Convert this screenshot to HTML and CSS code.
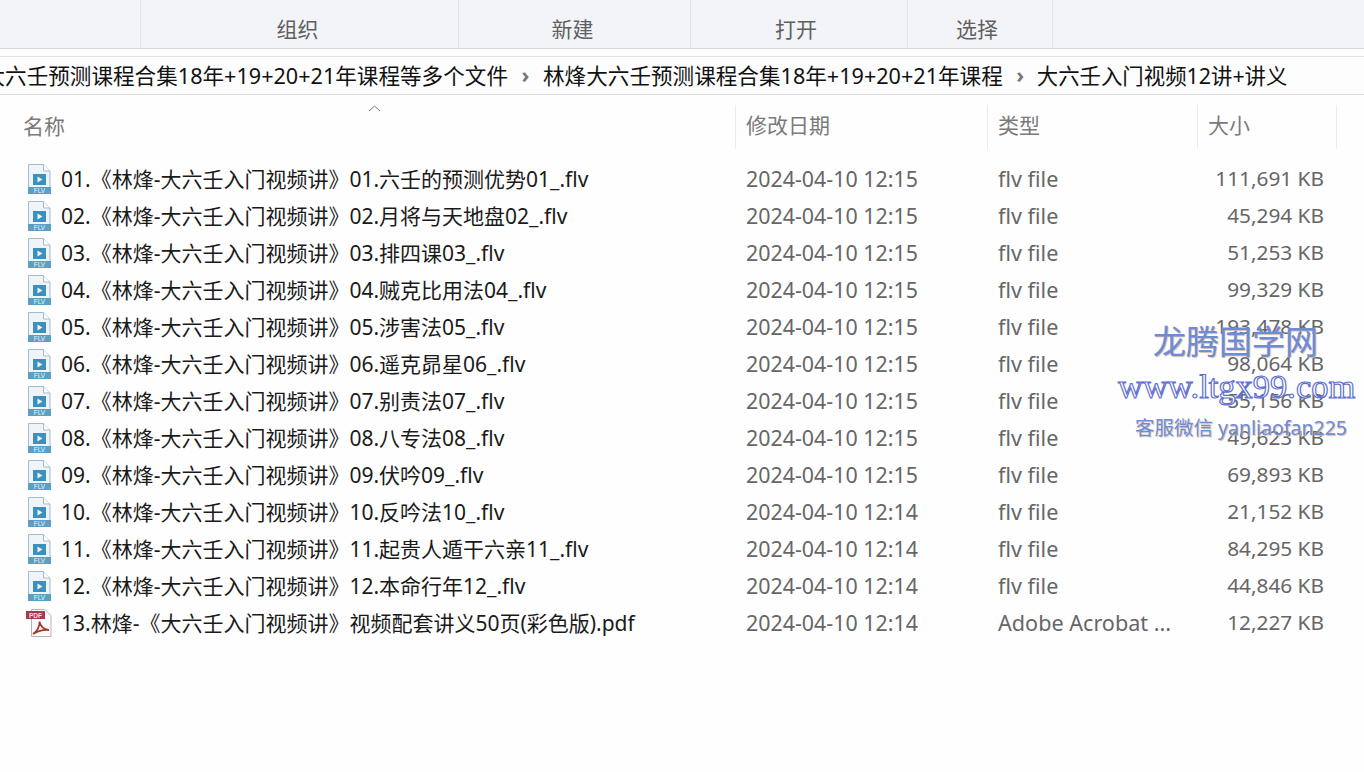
FILE: index.html
```html
<!DOCTYPE html>
<html lang="zh-CN">
<head>
    <meta charset="UTF-8">
    <title>大六壬入门视频12讲+讲义</title>
    <link rel="stylesheet" href="styles.css">
</head>
<body>
    <svg class="defs" width="0" height="0">
        <symbol id="flv" viewBox="0 0 24 30">
            <path d="M1.500 .5H16.500L23 7V29.500H1.500Z" fill="#eef4f8" stroke="#a3bccd"/>
            <path d="M16.500 .5V7H23" fill="#fff" stroke="#a3bccd"/>
            <rect x="6" y="10" width="13" height="11" fill="#3d8fbd"/>
            <path d="M10.500 12.500L15.500 15.500L10.500 18.500Z" fill="#e8f5fb"/>
            <rect x="1" y="23" width="23" height="7" fill="#5d9fc4"/>
            <text x="12.500" y="29" class="flv-label">FLV</text>
        </symbol>
        <symbol id="pdf" viewBox="0 0 26 28">
            <path d="M5.500 .5H19L25 6.500V27.500H5.500Z" fill="#fbfbfb" stroke="#b5b5b5"/>
            <rect x="0" y="2" width="19" height="8" fill="#a33a4e"/>
            <text x="9.500" y="8.500" class="pdf-label">PDF</text>
            <path d="M7 25C11 23 14 17 13.500 12.500C14 17 18 21 23 21C18 20.500 12 22 7 25Z" fill="none" stroke="#a8352e" stroke-width="1.800"/>
        </symbol>
    </svg>

    <div class="toolbar">
        <div class="tool-spacer"></div>
        <div class="tool tool-organize">组织</div>
        <div class="tool tool-new">新建</div>
        <div class="tool tool-open">打开</div>
        <div class="tool tool-select">选择</div>
    </div>

    <div class="address-bar">
        <div class="crumb-first"><span>大六壬预测课程合集18年+19+20+21年课程等多个文件</span></div>
        <span class="crumb-sep">›</span>
        <span class="crumb">林烽大六壬预测课程合集18年+19+20+21年课程</span>
        <span class="crumb-sep">›</span>
        <span class="crumb crumb-last">大六壬入门视频12讲+讲义</span>
    </div>

    <div class="list">
        <div class="sort-arrow"><svg width="13" height="7" viewBox="0 0 13 7"><path d="M1 6L6.500 1L12 6" fill="none" stroke="#777"/></svg></div>
        <div class="list-head">
            <div class="col-name">名称</div>
            <div class="col-date">修改日期</div>
            <div class="col-type">类型</div>
            <div class="col-size">大小</div>
        </div>
        <div class="rows">
            <div class="row"><svg class="file-icon"><use href="#flv"/></svg><div class="col-name">01.《林烽-大六壬入门视频讲》01.六壬的预测优势01_.flv</div><div class="col-date">2024-04-10 12:15</div><div class="col-type">flv file</div><div class="col-size">111,691 KB</div></div>
            <div class="row"><svg class="file-icon"><use href="#flv"/></svg><div class="col-name">02.《林烽-大六壬入门视频讲》02.月将与天地盘02_.flv</div><div class="col-date">2024-04-10 12:15</div><div class="col-type">flv file</div><div class="col-size">45,294 KB</div></div>
            <div class="row"><svg class="file-icon"><use href="#flv"/></svg><div class="col-name">03.《林烽-大六壬入门视频讲》03.排四课03_.flv</div><div class="col-date">2024-04-10 12:15</div><div class="col-type">flv file</div><div class="col-size">51,253 KB</div></div>
            <div class="row"><svg class="file-icon"><use href="#flv"/></svg><div class="col-name">04.《林烽-大六壬入门视频讲》04.贼克比用法04_.flv</div><div class="col-date">2024-04-10 12:15</div><div class="col-type">flv file</div><div class="col-size">99,329 KB</div></div>
            <div class="row"><svg class="file-icon"><use href="#flv"/></svg><div class="col-name">05.《林烽-大六壬入门视频讲》05.涉害法05_.flv</div><div class="col-date">2024-04-10 12:15</div><div class="col-type">flv file</div><div class="col-size">193,478 KB</div></div>
            <div class="row"><svg class="file-icon"><use href="#flv"/></svg><div class="col-name">06.《林烽-大六壬入门视频讲》06.遥克昴星06_.flv</div><div class="col-date">2024-04-10 12:15</div><div class="col-type">flv file</div><div class="col-size">98,064 KB</div></div>
            <div class="row"><svg class="file-icon"><use href="#flv"/></svg><div class="col-name">07.《林烽-大六壬入门视频讲》07.别责法07_.flv</div><div class="col-date">2024-04-10 12:15</div><div class="col-type">flv file</div><div class="col-size">55,156 KB</div></div>
            <div class="row"><svg class="file-icon"><use href="#flv"/></svg><div class="col-name">08.《林烽-大六壬入门视频讲》08.八专法08_.flv</div><div class="col-date">2024-04-10 12:15</div><div class="col-type">flv file</div><div class="col-size">49,623 KB</div></div>
            <div class="row"><svg class="file-icon"><use href="#flv"/></svg><div class="col-name">09.《林烽-大六壬入门视频讲》09.伏吟09_.flv</div><div class="col-date">2024-04-10 12:15</div><div class="col-type">flv file</div><div class="col-size">69,893 KB</div></div>
            <div class="row"><svg class="file-icon"><use href="#flv"/></svg><div class="col-name">10.《林烽-大六壬入门视频讲》10.反吟法10_.flv</div><div class="col-date">2024-04-10 12:14</div><div class="col-type">flv file</div><div class="col-size">21,152 KB</div></div>
            <div class="row"><svg class="file-icon"><use href="#flv"/></svg><div class="col-name">11.《林烽-大六壬入门视频讲》11.起贵人遁干六亲11_.flv</div><div class="col-date">2024-04-10 12:14</div><div class="col-type">flv file</div><div class="col-size">84,295 KB</div></div>
            <div class="row"><svg class="file-icon"><use href="#flv"/></svg><div class="col-name">12.《林烽-大六壬入门视频讲》12.本命行年12_.flv</div><div class="col-date">2024-04-10 12:14</div><div class="col-type">flv file</div><div class="col-size">44,846 KB</div></div>
            <div class="row"><svg class="file-icon file-icon-pdf"><use href="#pdf"/></svg><div class="col-name">13.林烽-《大六壬入门视频讲》视频配套讲义50页(彩色版).pdf</div><div class="col-date">2024-04-10 12:14</div><div class="col-type">Adobe Acrobat ...</div><div class="col-size">12,227 KB</div></div>
        </div>
    </div>

    <div class="watermark">
        <div class="wm-title">龙腾国学网</div>
        <div class="wm-url">www.ltgx99.com</div>
        <div class="wm-contact">客服微信 yanliaofan225</div>
    </div>
</body>
</html>
```

FILE: styles.css
```css
html, body {
    margin: 0;
    padding: 0;
    height: 100%;
    overflow: hidden;
}

body {
    position: relative;
    background-color: #fefefe;
    font-family: "Noto Sans", "Noto Sans CJK SC", sans-serif;
    font-size: 21px;
    color: #1f1f1f;
}

.defs {
    position: absolute;
}

.flv-label {
    font-family: "Liberation Sans", sans-serif;
    font-size: 6.500px;
    fill: #e8f3f9;
    text-anchor: middle;
}

.pdf-label {
    font-family: "Liberation Sans", sans-serif;
    font-size: 6.500px;
    font-weight: bold;
    fill: #f3dde2;
    text-anchor: middle;
}

.toolbar {
    display: flex;
    height: 48px;
    background-color: #f2f4f8;
    border-bottom: 1px solid #d9d9d9;
    color: #5f5f5f;
}

.tool-spacer {
    width: 140px;
}

.tool {
    display: flex;
    align-items: center;
    justify-content: center;
    padding-top: 8px;
    padding-right: 4px;
    box-sizing: border-box;
    border-left: 1px solid #e2e4e8;
}

.tool-organize { width: 318px; }
.tool-new { width: 232px; }
.tool-open {
    width: 217px;
    padding-right: 6px;
}
.tool-select {
    width: 146px;
    padding-right: 6px;
    border-right: 1px solid #e2e4e8;
}

.address-bar {
    display: flex;
    align-items: center;
    height: 35px;
    margin-top: 7px;
    padding-bottom: 2px;
    background-color: #fdfdfd;
    border-top: 1px solid #e3e3e3;
    border-bottom: 1px solid #dedede;
    color: #111;
    font-size: 21.600px;
    white-space: nowrap;
}

.crumb-first {
    display: flex;
    justify-content: flex-end;
    width: 508px;
    flex: none;
    overflow: hidden;
}

.crumb-first span {
    flex: none;
}

.crumb-sep {
    width: 35px;
    flex: none;
    text-align: center;
    color: #777;
    font-weight: bold;
}

.crumb-last {
    margin-left: -1px;
    font-size: 21.400px;
}

.list {
    position: relative;
}

.sort-arrow {
    position: absolute;
    left: 368px;
    top: 9px;
    line-height: 0;
}

.list-head {
    display: flex;
    align-items: center;
    height: 63px;
    color: #7a7a7a;
}

.list-head .col-name {
    padding-left: 23px;
    padding-bottom: 4px;
    width: 712px;
}
.list-head .col-date,
.list-head .col-type,
.list-head .col-size {
    height: 44px;
    line-height: 40px;
    box-sizing: border-box;
    border-left: 1px solid #ececec;
}
.list-head .col-date { width: 252px; padding-left: 10px; }
.list-head .col-type { width: 210px; padding-left: 10px; }
.list-head .col-size {
    width: 140px;
    padding-left: 10px;
    border-right: 1px solid #ececec;
}

.rows {
    padding-top: 2px;
}

.row {
    display: flex;
    align-items: center;
    height: 37px;
    white-space: nowrap;
}

.file-icon {
    width: 24px;
    height: 30px;
    margin-left: 27px;
    margin-right: 10px;
    flex: none;
}

.file-icon-pdf {
    width: 26px;
    height: 28px;
    margin-left: 26px;
    margin-right: 9px;
}

.row .col-name {
    width: 685px;
    flex: none;
    padding-bottom: 2px;
    color: #1a1a1a;
}

.row .col-date {
    width: 252px;
    flex: none;
    font-size: 21.400px;
    color: #666;
}

.row .col-type {
    width: 190px;
    flex: none;
    font-size: 21.600px;
    color: #666;
}

.row .col-size {
    width: 136px;
    flex: none;
    padding-bottom: 2px;
    text-align: right;
    font-size: 20.800px;
    color: #666;
}

.watermark {
    position: absolute;
    left: 1118px;
    top: 322px;
    white-space: nowrap;
    color: #6f8ad6;
}

.wm-title {
    margin-left: 35px;
    font-size: 33px;
    line-height: 40px;
    -webkit-text-stroke: .2px #6f8ad6;
    text-shadow: 1px 1px 1px #cdbfb5;
}

.wm-url {
    font-family: "Liberation Serif", serif;
    font-size: 34.500px;
    line-height: 48px;
    color: #fff;
    -webkit-text-stroke: 1.200px #5f6fd0;
}

.wm-contact {
    margin-left: 17px;
    font-size: 19.500px;
    line-height: 36px;
    text-shadow: 1px 1px 1px #cdbfb5;
}
```
